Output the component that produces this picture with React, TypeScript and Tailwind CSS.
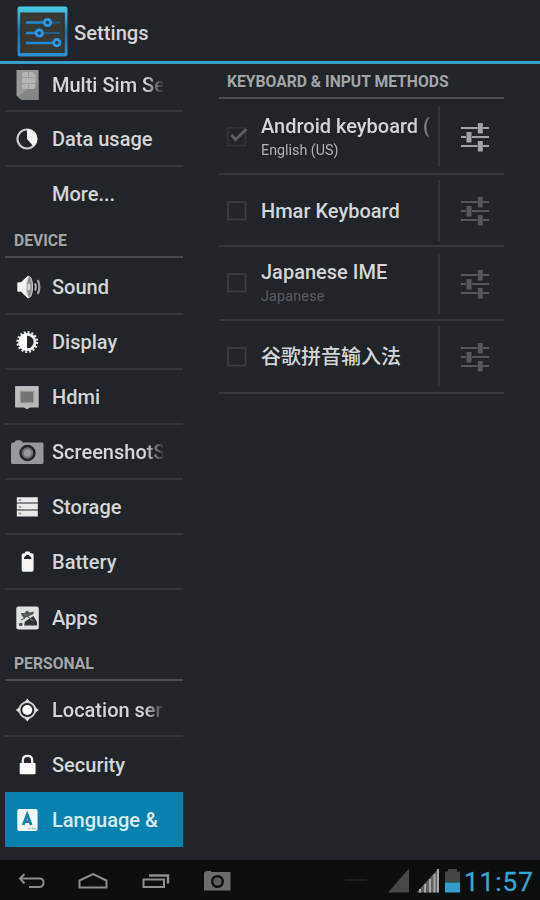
import type { ReactNode } from 'react';

const fade = '[mask-image:linear-gradient(to_right,black_84%,transparent_102%)]';

function Icon({ children, w = 34, h = 30 }: { children: ReactNode; w?: number; h?: number }) {
  return (
    <svg width={w} height={h} viewBox={`0 0 ${w} ${h}`} className="shrink-0" fill="none">
      {children}
    </svg>
  );
}

const SimIcon = () => (
  <Icon>
    <path d="M6.500 0H28.500V30H11.500L6.500 25.500Z" fill="#989898" />
    <path d="M28.500 10V30H11.500L8 27Z" fill="#858585" />
    <path d="M12 3.500Q12 2 13.500 2H22.500L25.500 5V17.500Q25.500 19 24 19H13.500Q12 19 12 17.500Z" fill="#b4b4b4" />
    <path d="M12 7.500H25.500M12 13.500H25.500M18.500 2V7.500M18.500 13.500V19" stroke="#9c9c9c" strokeWidth="1" />
  </Icon>
);

const DataIcon = () => (
  <Icon>
    <circle cx="17" cy="15" r="9.500" stroke="#c9cbcc" strokeWidth="2.200" />
    <path d="M17 5A10 10 0 0 1 23.500 22.600L17 15Z" fill="#f2f2f2" />
  </Icon>
);

const SoundIcon = () => (
  <Icon>
    <path d="M7.300 11.500Q7.300 10.300 8.500 10.300H11L18 3.500Q22 6 22 15T18 26.500L11 19.700H8.500Q7.300 19.700 7.300 18.500Z" fill="#f4f4f4" />
    <ellipse cx="19.500" cy="15" rx="3" ry="10.300" fill="#8e9091" stroke="#cfcfcf" strokeWidth="1" />
    <ellipse cx="18.800" cy="15" rx="1.500" ry="3.500" fill="#d6d6d6" />
    <path d="M25 11.500Q26.800 15 25 18.500" stroke="#b5b7b8" strokeWidth="1.800" />
    <path d="M27.800 8Q31 15 27.800 22" stroke="#a0a2a3" strokeWidth="2.200" />
  </Icon>
);

const DisplayIcon = () => (
  <Icon>
    <circle cx="17.300" cy="15" r="9.600" stroke="#e4e4e4" strokeWidth="2.600" strokeDasharray="2 1.770" />
    <circle cx="17.300" cy="15" r="7.700" stroke="#ededed" strokeWidth="2.800" />
    <path d="M17 6.500A8.500 8.500 0 0 0 17 23.500Z" fill="#fff" />
    <path d="M17 9Q22.500 11 22.500 15T17 21Z" fill="#24282b" />
  </Icon>
);

const HdmiIcon = () => (
  <Icon>
    <path d="M5.300 4.300H28.700V25.500H20L17 27.300L14 25.500H5.300Z" fill="#b9b9b9" />
    <path d="M5.300 4.300H28.700L23 10H11L5.300 25.500Z" fill="#bfbfbf" />
    <path d="M10.300 9.200H23.700V20.800H10.300Z" fill="#747574" stroke="#a0a0a0" strokeWidth="1" />
  </Icon>
);

const CameraIcon = () => (
  <Icon>
    <path d="M1 7.500Q1 5.500 3 5.500H4.500Q5 3.300 7 3.300H10Q12 3.300 12.500 5.500H32Q33.500 5.500 33.500 7V25.500Q33.500 27 32 27H2.500Q1 27 1 25.500Z" fill="#96989a" />
    <circle cx="17.500" cy="16" r="7" fill="#6d6f71" stroke="#222529" strokeWidth="2.400" />
    <circle cx="17.500" cy="16" r="3.700" fill="#97999a" />
  </Icon>
);

const StorageIcon = () => (
  <Icon>
    <path d="M6.800 5.200H27.800V10.500H6.800ZM6.800 12H27.800V17.500H6.800ZM6.800 19H27.800V24.400H6.800Z" fill="#e9eaea" />
    <path d="M8.700 8H11.200M8.700 15H11.200M8.700 21.500H11.200" stroke="#85888a" strokeWidth="1.700" />
    <path d="M6.800 11.200H27.800M6.800 18.200H27.800" stroke="#85888a" strokeWidth="1.500" />
  </Icon>
);

const BatteryIcon = () => (
  <Icon>
    <path d="M11.700 8Q11.700 6.300 13.500 6.300H14.500L15.500 4.500H19.500L20.500 6.300H21.800Q23.600 6.300 23.600 8V23Q23.600 24.800 21.800 24.800H13.500Q11.700 24.800 11.700 23Z" fill="#f5f5f5" />
    <path d="M14 12V10.500L16.500 8H18.700L21.300 10.500V12Z" fill="#24282b" />
  </Icon>
);

const AppsIcon = () => (
  <Icon>
    <rect x="6.300" y="3.500" width="22.500" height="23" rx="2" fill="#dfe1e1" />
    <path d="M11.500 12L11 10L14.500 10L17 7.500L20 9.500L24 8.500L23 11.500L19 13L14 15.500Z" fill="#53585b" />
    <path d="M15 18.500L23.500 13L27 19V22.500H14Z" fill="#2f3437" />
    <path d="M9.500 20.500H12V22.500H9.500ZM11 17L15 15" stroke="#4b5053" fill="#4b5053" />
    <path d="M14 10.500L23 18" stroke="#6d7274" strokeWidth="1.200" />
  </Icon>
);

const LocationIcon = () => (
  <Icon>
    <circle cx="17.300" cy="15" r="7.900" stroke="#d0d2d2" strokeWidth="2" />
    <circle cx="17.300" cy="15" r="5" fill="#fff" />
    <path d="M17.300 3.500L20 7H14.600ZM17.300 26.500L20 23H14.600ZM5.800 15L9.300 12.300V17.700ZM28.800 15L25.300 12.300V17.700Z" fill="#e0e0e0" />
  </Icon>
);

const LockIcon = () => (
  <Icon>
    <rect x="9.700" y="13" width="15.900" height="11.200" rx="1" fill="#fafafa" />
    <path d="M12.800 13V10.500Q12.800 5.900 17.500 5.900T22.200 10.500V13" stroke="#f0f0f0" strokeWidth="2.300" />
  </Icon>
);

const LanguageIcon = () => (
  <Icon>
    <rect x="7.300" y="4" width="20.300" height="22" rx="2" fill="#f2f8fb" />
    <path d="M13.200 20L17.200 9.500L21.200 20M14.500 16.700H19.900" stroke="#1581ab" strokeWidth="2.700" />
    <path d="M18.500 23.800H20.500M21.500 23.800H23.500M24.500 23.800H26" stroke="#5ba5c2" />
  </Icon>
);

function Item({ icon, label, size = 'h-[55px]', line = true, active = false, width = 'w-[111px]', cut = false }: {
  icon?: ReactNode; label: string; size?: string; line?: boolean; active?: boolean; width?: string; cut?: boolean;
}) {
  return (
    <div className={`flex shrink-0 items-center ${size} ${line ? 'border-b-2 border-[#33373b]' : ''} ${active ? 'bg-[#0782ae] text-[#d9edf4]' : ''}`}>
      <div className="ml-[5px] mr-2 flex w-[34px] shrink-0">{icon}</div>
      <div className={`overflow-hidden whitespace-nowrap text-[20px] font-medium leading-7 ${width} ${cut ? fade : ''}`}>{label}</div>
    </div>
  );
}

function Section({ title }: { title: string }) {
  return (
    <div className="flex h-9 shrink-0 items-center border-b-2 border-[#484b4e] pl-[9px] pt-[3px] text-[15.700px] font-bold leading-5 text-[#a3a5a7]">
      {title}
    </div>
  );
}

function Sliders({ bright }: { bright: boolean }) {
  return (
    <svg width="30" height="32" viewBox="0 0 30 32" fill="none" className={bright ? 'text-[#a2a5a7]' : 'text-[#54585b]'}>
      <path d="M1 7H17.500M23 7H29M1 16H6M12 16H29M1 25H17.500M23 25H29" stroke="currentColor" strokeWidth="2.200" />
      <path d="M20.300 2V12.500M9 11V21.500M20.300 20V30.500" stroke="currentColor" strokeWidth="5" />
    </svg>
  );
}

function Keyboard({ title, sub, checked = false, size, cut = false }: {
  title: string; sub?: string; checked?: boolean; size: string; cut?: boolean;
}) {
  return (
    <div className={`flex items-center border-b-2 border-[#35393c] ${size}`}>
      <svg width="22" height="22" viewBox="0 0 22 22" fill="none" className="ml-2 shrink-0">
        <rect x="1" y="2" width="17.500" height="17.500" stroke={checked ? '#303438' : '#3b3f43'} strokeWidth="1.700" />
        {checked && <path d="M4.500 9L8.500 13.500L19.500 3" stroke="#5b5f62" strokeWidth="3" />}
      </svg>
      <div className={`ml-3 w-[168px] shrink-0 overflow-hidden whitespace-nowrap ${cut ? '[mask-image:linear-gradient(to_right,black_91%,transparent_106%)]' : ''}`}>
        <div className="text-[20px] font-medium leading-6">{title}</div>
        {sub && <div className={`pt-[2px] text-[14.300px] leading-5 ${checked ? 'text-[#b0b2b4]' : 'tracking-[0.200px] text-[#5a5e64]'}`}>{sub}</div>}
      </div>
      <div className="ml-[9px] h-[61px] w-[2px] bg-[#313539]" />
      <div className="ml-5 pt-px"><Sliders bright={checked} /></div>
    </div>
  );
}

export default function App() {
  return (
    <div className="flex h-[900px] w-[540px] flex-col overflow-hidden bg-[#212428] font-['Roboto','Noto_Sans_CJK_SC',sans-serif] text-[#d3d5d6]">
      <header className="flex h-16 shrink-0 items-center border-b-[3px] border-[#36a0c7] pl-[17px]">
        <svg width="51" height="51" viewBox="0 0 51 51" fill="none" className="mt-px">
          <defs>
            <linearGradient id="edge" x1="0" y1="0" x2="0" y2="1">
              <stop stopColor="#4bcee9" />
              <stop offset="0.500" stopColor="#246b9d" />
              <stop offset="1" stopColor="#2c91d5" />
            </linearGradient>
          </defs>
          <rect x="0.500" y="0.500" width="50" height="50" rx="2.500" fill="url(#edge)" />
          <rect x="3.500" y="6.500" width="44" height="40.500" fill="#383932" />
          <path d="M4 7V47M47 7V47" stroke="#322b29" />
          <path d="M9 16.500H26.500M9 27H18M9 37H36" stroke="#2189d3" strokeWidth="2.400" />
          <path d="M35 16.500H43M27 27H43" stroke="#245b82" strokeWidth="2" />
          <g stroke="#2898e7" strokeWidth="2.800">
            <circle cx="30.500" cy="16.500" r="3.200" />
            <circle cx="22.300" cy="27" r="3.200" />
            <circle cx="39.800" cy="36.700" r="3.200" />
          </g>
        </svg>
        <h1 className="ml-[6px] mt-[5px] text-[20.200px] font-medium leading-7">Settings</h1>
      </header>

      <main className="flex min-h-0 flex-1">
        <nav className="ml-[5px] flex w-[178px] flex-col">
          <Item icon={<SimIcon />} label="Multi Sim Settings" size="h-12 pb-1" cut />
          <Item icon={<DataIcon />} label="Data usage" size="h-[55px] pt-px" />
          <Item label="More..." size="h-[55px] pb-[2px]" line={false} />
          <Section title="DEVICE" />
          <Item icon={<SoundIcon />} label="Sound" size="h-[57px] pt-[2px]" />
          <Item icon={<DisplayIcon />} label="Display" />
          <Item icon={<HdmiIcon />} label="Hdmi" />
          <Item icon={<CameraIcon />} label="ScreenshotSetting" size="h-[55px] pt-px" cut />
          <Item icon={<StorageIcon />} label="Storage" size="h-[55px] pt-px" />
          <Item icon={<BatteryIcon />} label="Battery" size="h-[55px] pt-px" />
          <Item icon={<AppsIcon />} label="Apps" line={false} />
          <Section title="PERSONAL" />
          <Item icon={<LocationIcon />} label="Location services" size="h-14 pt-[3px]" cut />
          <Item icon={<LockIcon />} label="Security" line={false} />
          <Item icon={<LanguageIcon />} label="Language & input" width="w-[108px]" size="h-[55px] pt-px" line={false} active />
        </nav>

        <section className="ml-9 w-[285px]">
          <h2 className="flex h-[35px] items-center whitespace-nowrap border-b-2 border-[#4b4e51] pl-2 pt-[2px] text-[15.700px] font-bold leading-5 text-[#a3a5a7]">
            KEYBOARD &amp; INPUT METHODS
          </h2>
          <Keyboard title="Android keyboard (AOSP)" sub="English (US)" checked size="h-[76px] pt-px" cut />
          <Keyboard title="Hmar Keyboard" size="h-[72px] pt-px" />
          <Keyboard title="Japanese IME" sub="Japanese" size="h-[74px]" />
          <Keyboard title="谷歌拼音输入法" size="h-[73px]" />
        </section>
      </main>

      <footer className="flex h-10 shrink-0 items-center bg-[#0d0e0e]">
        <svg width="240" height="40" viewBox="0 0 240 40" fill="none" className="shrink-0" stroke="#8b8d8e" strokeWidth="2">
          <path d="M24.500 14L20 18.500L24.500 23.500M20.500 18.500H39.500Q43.500 18.500 43.500 22.500T39.500 27H29" />
          <path d="M79.500 20.500L93 14L106.500 20.500V27.500H79.500Z" />
          <path d="M143.500 19.500H164V27H143.500Z" />
          <path d="M149 15.500H168V23.500" strokeWidth="2.500" />
          <path d="M204 13Q204 12 205.500 12V11H211V12H230.500V30.500H204Z" fill="#6b6d6d" stroke="none" />
          <circle cx="217.500" cy="21.500" r="5.300" fill="#5e6060" stroke="#101111" strokeWidth="2.500" />
        </svg>
        <div className="ml-[105px] h-[2px] w-[22px] bg-[#202122]" />
        <svg width="75" height="28" viewBox="0 0 75 28" className="ml-5 mt-px shrink-0" fill="none">
          <path d="M1 25.500L22 1.500V25.500Z" fill="#474848" />
          <path d="M29.500 25.500L51.500 1.500V25.500Z" fill="#606161" />
          <path d="M33 25.500V22M38 25.500V17M43 25.500V12M47.500 25.500V7M51 25.500V2" stroke="#a7a8a8" strokeWidth="2" />
          <path d="M58 4.500H61V2H70V4.500H73V15.500H58Z" fill="#444545" />
          <path d="M58 15.500H73V25.500H58Z" fill="#329fca" />
        </svg>
        <time className="ml-[2px] mt-[4px] shrink-0 text-[26px] leading-8 tracking-[1px] text-[#35a7d2] [-webkit-text-stroke:0.3px_#35a7d2]">11:57</time>
      </footer>
    </div>
  );
}
